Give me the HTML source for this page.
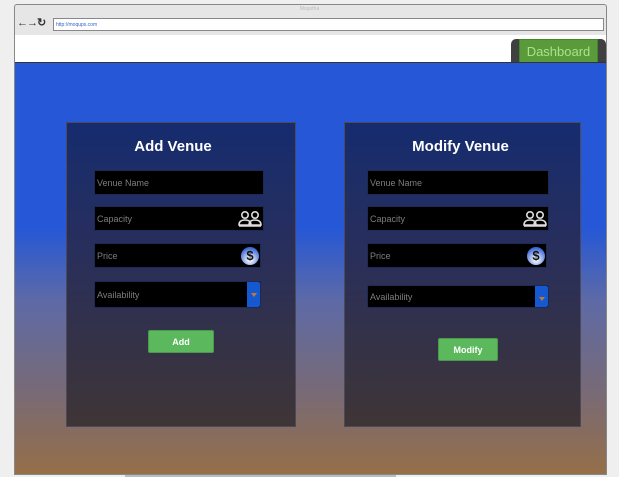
<!DOCTYPE html><html><head><style>
*{margin:0;padding:0;box-sizing:border-box}
body{width:619px;height:477px;background:#efefef;position:relative;overflow:hidden;font-family:"Liberation Sans",sans-serif}
.a{position:absolute}
.inp{position:absolute;background:#000;border:1px solid #1c2a55;color:#7d7d7d;font-size:9px;padding-left:2px;display:flex;align-items:center}
.panel{position:absolute;background:linear-gradient(#152c6f,#2a2f5a 45%,#3f3536);border:1px solid #4a4a5a}
.h{position:absolute;width:100%;text-align:center;color:#fff;font-weight:bold;font-size:15px}
.btn{position:absolute;background:#5cb85c;color:#fff;font-size:9px;font-weight:bold;display:flex;align-items:center;justify-content:center;border-radius:2px;border:1px solid #4a9a4a}
.sel{position:absolute;right:0;top:0;bottom:0;width:13px;background:#1558d0;border-radius:0 2px 2px 0}
.sel:after{content:"";position:absolute;left:4px;top:11px;border:3px solid transparent;border-top:4px solid #c07a30}
.dl{position:absolute;right:1px;top:3px;width:18px;height:18px;border-radius:50%;background:radial-gradient(circle at 50% 70%,#fff 5%,#3a66d6 75%);color:#111;font-size:13px;font-weight:bold;text-align:center;line-height:18px}
</style></head><body>
<div class="a" style="left:14px;top:4px;width:593px;height:471px;background:#e6e6e6;border:1px solid #888;border-radius:3px 3px 0 0"></div>
<div class="a" style="left:0;top:6px;width:619px;text-align:center;font-size:5px;color:#bbb">Mogotha</div>
<div class="a" style="left:17px;top:16px;font-size:11px;font-weight:bold;color:#333;letter-spacing:-1px">←→↻</div>
<div class="a" style="left:53px;top:18px;width:551px;height:13px;background:#fff;border:1px solid #888;font-size:5px;color:#36c;padding:3px 2px">http://moqups.com</div>
<div class="a" style="left:15px;top:35px;width:591px;height:27px;background:#fff"></div>
<div class="a" style="left:511px;top:39px;width:95px;height:24px;background:#404040;border-radius:5px 5px 0 0"></div>
<div class="a" style="left:519px;top:39px;width:79px;height:24px;background:#5a9a3a;border:1px solid #3d8a2a;color:#a8e38a;font-size:13px;display:flex;align-items:center;justify-content:center">Dashboard</div>
<div class="a" style="left:15px;top:62px;width:591px;height:412px;background:linear-gradient(#2557d6 0%,#2557d6 40%,#5e6aa6 58%,#786a76 80%,#956f48 100%);border-top:1px solid #333"></div>
<div class="a" style="left:125px;top:475px;width:271px;height:2px;background:#bbb"></div>

<div class="panel" style="left:66px;top:122px;width:230px;height:305px">
<div class="h" style="top:15px;left:-8px">Add Venue</div></div>
<div class="inp" style="left:94px;top:170px;width:170px;height:25px">Venue Name</div>
<div class="inp" style="left:94px;top:206px;width:170px;height:25px">Capacity<svg class="a" style="right:1px;top:3px" width="24" height="18" viewBox="0 0 24 18" fill="none" stroke="#ddd" stroke-width="1.6"><circle cx="7" cy="5" r="3.2"/><circle cx="17" cy="5" r="3.2"/><path d="M1 15q0-5 6-5t6 5zM11 15q0-5 6-5t6 5zM1 16h22"/></svg></div>
<div class="inp" style="left:94px;top:243px;width:167px;height:25px">Price<span class="dl">$</span></div>
<div class="inp" style="left:94px;top:281px;width:167px;height:27px;border-radius:2px">Availability<div class="sel"></div></div>
<div class="btn" style="left:148px;top:330px;width:66px;height:23px">Add</div>

<div class="panel" style="left:344px;top:122px;width:237px;height:305px">
<div class="h" style="top:15px;left:-2px">Modify Venue</div></div>
<div class="inp" style="left:367px;top:170px;width:182px;height:25px">Venue Name</div>
<div class="inp" style="left:367px;top:206px;width:182px;height:25px">Capacity<svg class="a" style="right:1px;top:3px" width="24" height="18" viewBox="0 0 24 18" fill="none" stroke="#ddd" stroke-width="1.6"><circle cx="7" cy="5" r="3.2"/><circle cx="17" cy="5" r="3.2"/><path d="M1 15q0-5 6-5t6 5zM11 15q0-5 6-5t6 5zM1 16h22"/></svg></div>
<div class="inp" style="left:367px;top:243px;width:180px;height:25px">Price<span class="dl">$</span></div>
<div class="inp" style="left:367px;top:285px;width:182px;height:23px;border-radius:2px">Availability<div class="sel"></div></div>
<div class="btn" style="left:438px;top:338px;width:60px;height:23px">Modify</div>
</body></html>
